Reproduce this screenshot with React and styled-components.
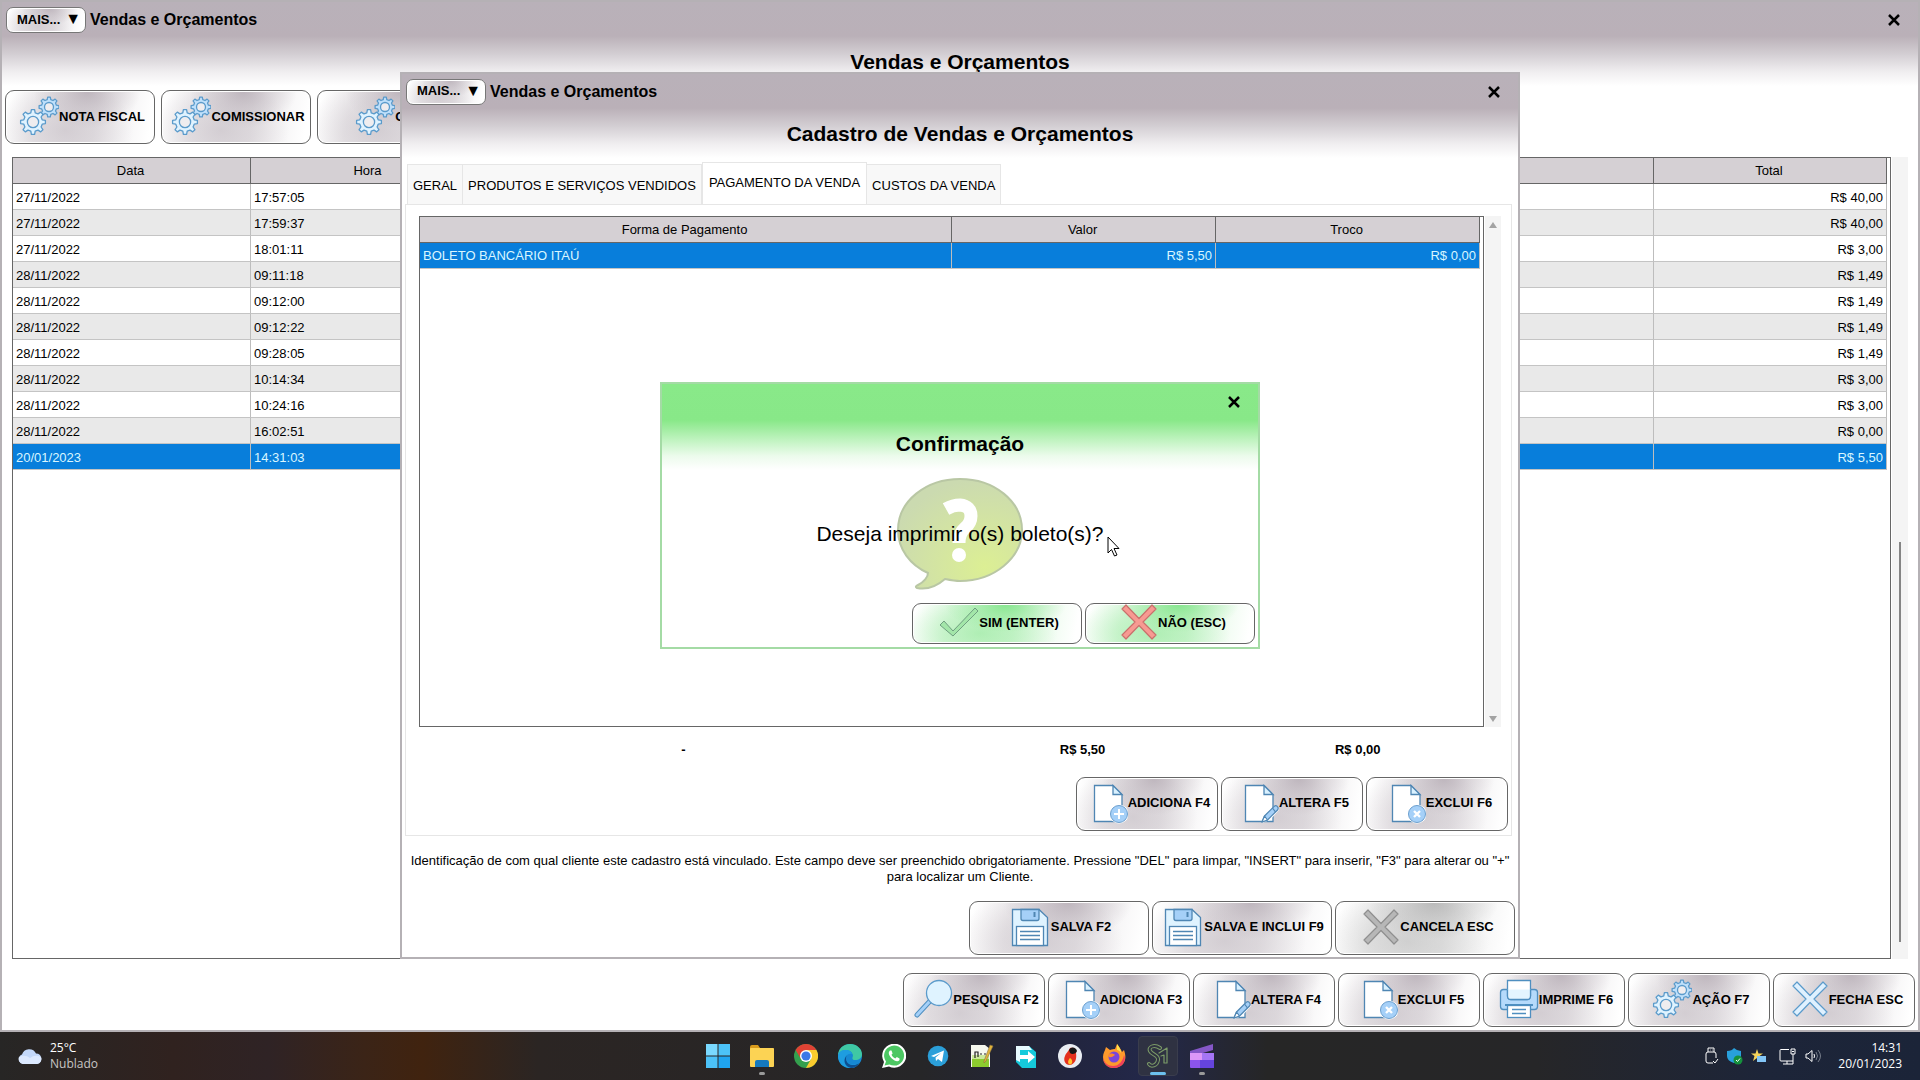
import React from "react";
import styled, { createGlobalStyle } from "styled-components";

const GlobalStyle = createGlobalStyle`
  * {
    box-sizing: border-box;
  }

  body {
    margin: 0;
    background: #262626;
    color: #000;
    font-family: "Liberation Sans", Arial, sans-serif;
    font-size: 13px;
  }

  button {
    margin: 0;
    font-family: inherit;
    color: inherit;
  }
`;

const sales = [
  { date: "27/11/2022", time: "17:57:05", total: "R$ 40,00" },
  { date: "27/11/2022", time: "17:59:37", total: "R$ 40,00" },
  { date: "27/11/2022", time: "18:01:11", total: "R$ 3,00" },
  { date: "28/11/2022", time: "09:11:18", total: "R$ 1,49" },
  { date: "28/11/2022", time: "09:12:00", total: "R$ 1,49" },
  { date: "28/11/2022", time: "09:12:22", total: "R$ 1,49" },
  { date: "28/11/2022", time: "09:28:05", total: "R$ 1,49" },
  { date: "28/11/2022", time: "10:14:34", total: "R$ 3,00" },
  { date: "28/11/2022", time: "10:24:16", total: "R$ 3,00" },
  { date: "28/11/2022", time: "16:02:51", total: "R$ 0,00" },
  { date: "20/01/2023", time: "14:31:03", total: "R$ 5,50", selected: true },
];

const tabs = [
  "GERAL",
  "PRODUTOS E SERVIÇOS VENDIDOS",
  "PAGAMENTO DA VENDA",
  "CUSTOS DA VENDA",
];

/* ---------- button icons, all on a 44x44 box ---------- */

const gearPath = (cx, cy, r, teeth) => {
  const points = [];
  const step = (Math.PI * 2) / teeth;
  for (let i = 0; i < teeth; i++) {
    const a = i * step - Math.PI / 2;
    [
      [-0.3, 0.76],
      [-0.16, 1],
      [0.16, 1],
      [0.3, 0.76],
    ].forEach(([k, m]) => {
      const x = cx + Math.cos(a + k * step) * r * m;
      const y = cy + Math.sin(a + k * step) * r * m;
      points.push(`${x.toFixed(1)} ${y.toFixed(1)}`);
    });
  }
  return `M${points.join("L")}Z`;
};

const Gear = ({ cx, cy, r, fill, teeth }) => (
  <g stroke="#5b9bcb" strokeWidth="1.3" strokeLinejoin="round">
    <path d={gearPath(cx, cy, r, teeth)} fill={fill} />
    <circle cx={cx} cy={cy} r={r * 0.45} fill="#efedef" />
  </g>
);

const ButtonIcon = ({ children }) => <Icon viewBox="-1 0 44 44">{children}</Icon>;

const GearsIcon = () => (
  <ButtonIcon>
    <Gear cx={33} cy={13} r={10} fill="#bfe0fb" teeth={8} />
    <Gear cx={17} cy={28} r={12.5} fill="#e0f3ff" teeth={8} />
  </ButtonIcon>
);

const Sheet = () => (
  <g stroke="#4f86b3" strokeWidth="1.3">
    <path d="M9.5 4.5H28L37 13.500V40.500H9.5Z" fill="#fff" />
    <path d="M28 4.500V13.500H37Z" fill="#d9f1ff" />
  </g>
);

const AddIcon = () => (
  <ButtonIcon>
    <Sheet />
    <circle cx="34" cy="33" r="9.500" fill="#fff" />
    <circle cx="34" cy="33" r="8.500" fill="#a5d0f8" stroke="#6c9fce" />
    <path d="M34 28V38M29 33H39" stroke="#fff" strokeWidth="2" />
  </ButtonIcon>
);

const EditIcon = () => (
  <ButtonIcon>
    <Sheet />
    <path d="M26 42L29 34L39 24L44 28L34 39Z" fill="#fff" />
    <g stroke="#4f86b3" strokeWidth="1.200" strokeLinejoin="round">
      <path d="M26 41L28.500 35L38.500 25Q40.500 24 42 26.500Q42.500 28 41.500 29L31.500 39Z" fill="#a5d0f8" />
      <path d="M26 41L28.500 35L31.500 39Z" fill="#fff" />
      <path d="M36.500 27L39.500 31" />
    </g>
  </ButtonIcon>
);

const DeleteIcon = () => (
  <ButtonIcon>
    <Sheet />
    <circle cx="34" cy="33" r="9.500" fill="#fff" />
    <circle cx="34" cy="33" r="8.500" fill="#a5d0f8" stroke="#6c9fce" />
    <path d="M31 30L37 36M37 30L31 36" stroke="#fff" strokeWidth="2.400" />
  </ButtonIcon>
);

const SearchIcon = () => (
  <ButtonIcon>
    <path d="M20 24L7 38" stroke="#4f8fc0" strokeWidth="5" strokeLinecap="round" />
    <path d="M20 24L7 38" stroke="#a5d0f8" strokeWidth="3" strokeLinecap="round" />
    <circle cx="29" cy="16" r="12.500" fill="#dff3ff" stroke="#5b9bcb" strokeWidth="1.300" />
  </ButtonIcon>
);

const PrinterIcon = () => (
  <ButtonIcon>
    <g stroke="#4f8fc0" strokeWidth="1.300">
      <rect x="4.500" y="12.500" width="37" height="20" rx="3" fill="#b5dafb" />
      <path d="M11.500 3.500H34.500V19Q34.500 22.500 31 22.500H15Q11.500 22.500 11.500 19Z" fill="#fff" />
      <path d="M11.500 12.500V19Q11.500 22.500 15 22.500H31Q34.500 22.500 34.500 19V12.500" fill="#e4f5ff" />
      <path d="M9 28H37" strokeWidth="2" />
      <rect x="11.500" y="28.500" width="23" height="12" fill="#fff" />
      <path d="M16 32.500H30M16 36.500H30" />
    </g>
  </ButtonIcon>
);

const FloppyIcon = () => (
  <ButtonIcon>
    <g stroke="#4f86b3" strokeWidth="1.300">
      <path d="M4.500 4.500H31L39.500 12.500V40.500H4.500Z" fill="#dff3ff" />
      <path d="M13 4.500H31V13.500Q31 15.500 29 15.500H15Q13 15.500 13 13.500Z" fill="#a5d0f8" />
      <path d="M26.500 7V12" strokeWidth="2" />
      <rect x="8.500" y="21.500" width="27" height="19" fill="#fff" />
      <path d="M12 26.500H32M12 30.500H32M12 34.500H32" />
    </g>
  </ButtonIcon>
);

const CrossIcon = ({ fill = "#dff1ff", stroke = "#5b9bcb" }) => (
  <ButtonIcon>
    <path
      d="M7 9L11 5L24 18.500L37 5L41 9L28 22L41 35L37 39L24 25.500L11 39L7 35L20 22Z"
      fill={fill}
      stroke={stroke}
      strokeWidth="1.200"
      strokeLinejoin="round"
    />
  </ButtonIcon>
);

const CheckIcon = () => (
  <ButtonIcon>
    <path d="M4 25L8 21L17 31L39 8L42 11L17 36Z" fill="#a3e6a9" stroke="#6f9f80" strokeLinejoin="round" />
  </ButtonIcon>
);

/* ---------- taskbar icons, all on a 24x24 box ---------- */

const taskIcons = [
  {
    name: "Iniciar",
    art: (
      <g fill="#4cc2f8">
        <path d="M0 0H11.500V11.500H0Z" fill="#7ad9ff" />
        <path d="M12.500 0H24V11.500H12.500Z" />
        <path d="M0 12.500H11.500V24H0Z" />
        <path d="M12.500 12.500H24V24H12.500Z" fill="#1fa4f0" />
      </g>
    ),
  },
  {
    name: "Explorador de Arquivos",
    open: true,
    art: (
      <g>
        <path d="M0 3Q0 1 2 1H8L10 4H22Q24 4 24 6V10H0Z" fill="#d99b1c" />
        <rect y="4" width="24" height="19" rx="1" fill="#fcd354" />
        <path d="M5 23V18Q5 16 7 16H17Q19 16 19 18V23Z" fill="#1579bd" />
      </g>
    ),
  },
  {
    name: "Chrome",
    art: (
      <g>
        <circle cx="12" cy="12" r="12" fill="#34a04e" />
        <path d="M12 12L1.600 6A12 12 0 0 1 22.400 6Z" fill="#e04234" />
        <path d="M12 6H22.400A12 12 0 0 1 12 24L17 15Z" fill="#fbcb2e" />
        <path d="M1.600 6L7 15L12 6Z" fill="#e04234" />
        <circle cx="12" cy="12" r="6" fill="#fff" />
        <circle cx="12" cy="12" r="4.600" fill="#3b78e7" />
      </g>
    ),
  },
  {
    name: "Edge",
    art: (
      <g>
        <circle cx="12" cy="12" r="12" fill="#1688d3" />
        <path d="M0 12C0 4 6 0 12 0C19 0 24 5 24 10C24 14 21 16 17 16C14 16 14 14 15 12C15 8 11 6 8 6C4 6 1 8 0 12Z" fill="#3fc8a4" />
        <path d="M0 12C1 7 4 6 8 6C11 6 14 8 14 10C9 9 7 13 9 17C11 21 16 22 21 19C18 24 14 24 12 24C5 24 0 19 0 12Z" fill="#1e9de0" />
        <path d="M9 11C7 14 8 20 14 21C17 21.500 20 20 21 19C20 22 16 24 13 24C7 23 4 16 9 11Z" fill="#0d4f91" />
      </g>
    ),
  },
  {
    name: "WhatsApp",
    art: (
      <g>
        <path d="M0 24L2 18A12 12 0 1 1 7 22.500Z" fill="#fff" />
        <path d="M2.500 21.500L4 17.500A10 10 0 1 1 7.500 20.500Z" fill="#4cc763" />
        <path d="M8 6.500C6 8 6.500 11 9.500 14.200C13 17.500 16 18 17.500 16V14.500L14.800 13L13.300 14.500C11.500 13.800 10.300 12.500 9.500 10.800L10.600 9.500L9.500 6.500Z" fill="#fff" />
      </g>
    ),
  },
  {
    name: "Telegram",
    art: (
      <g>
        <circle cx="12" cy="12" r="10.300" fill="#2b9fd9" />
        <path d="M5 12L18 6.500L16 18L12 15L10 17L9.500 13.500L15 9L8 13Z" fill="#fff" />
      </g>
    ),
  },
  {
    name: "Notepad++",
    art: (
      <g>
        <path d="M1 1H15L20 5V23H1Z" fill="#f5f7ee" />
        <path d="M2 14H19V23H2Z" fill="#8ccc2e" />
        <path d="M2 11H19V15H2Z" fill="#cbe89b" />
        <path d="M5 14V8H8V13M10 10H12M14 10H16" fill="none" stroke="#222" strokeWidth="1.200" />
        <path d="M14 17L20 1L23 2L16 17L14 19Z" fill="#e2b33a" stroke="#8a7340" strokeWidth="0.600" />
      </g>
    ),
  },
  {
    name: "Transferência",
    art: (
      <g>
        <path d="M2 2H15L22 8V24H8L2 18Z" fill="#15cadb" />
        <path d="M2 2H15L18 6H6V18L2 16Z" fill="#e8fbff" />
        <path d="M6 11H14V7L21 13L14 19V15H6Z" fill="#fff" />
      </g>
    ),
  },
  {
    name: "Gravador",
    art: (
      <g>
        <circle cx="12" cy="12" r="12" fill="#e9edf2" />
        <path d="M12 4C17 3 19 6 18 9C19 15 17 20 12 21C7 21 5 16 7 12C8 9 10 8 12 4Z" fill="#e4301d" />
        <path d="M11 6C13 2 18 3 19 7C18 10 14 11 12 9Z" fill="#161616" />
        <path d="M12 14C15 16 15 20 12 20.500C9 20 10 16 12 14Z" fill="#ffc22e" />
      </g>
    ),
  },
  {
    name: "Firefox",
    art: (
      <g>
        <path d="M1 13C1 9 3 7 4 3L8 6C10 5 12 5 13 5L15 0C17 3 19 5 20 8L22 6C24 12 24 16 21 20C16 25 8 25 4 21C2 19 1 16 1 13Z" fill="#ff9a2c" />
        <path d="M1 13C2 19 6 22 11 22C17 22 21 17 22 11C25 18 19 24 12 24C5 24 1 19 1 13Z" fill="#f0405a" />
        <path d="M15 0C17 3 19 5 19 9C18 7 16 6 15 6Z" fill="#ffe04d" />
        <circle cx="12" cy="13" r="5.500" fill="#7b45d9" />
        <path d="M6 11C8 9 11 9 13 11C11 12 10 14 7 13Z" fill="#ff8a2c" />
      </g>
    ),
  },
  {
    name: "Sistema de Vendas",
    active: true,
    art: (
      <g fill="none" strokeLinecap="round" strokeLinejoin="round">
        <path d="M14 4C8 0 2 3 4 7C6 11 13 11 12 16C11 22 5 23 3 20" stroke="#7b9a68" strokeWidth="4" />
        <path d="M14 4C8 0 2 3 4 7C6 11 13 11 12 16C11 22 5 23 3 20" stroke="#2f3240" strokeWidth="2" />
        <path d="M13 9L21 4V19H18V11L15 12" stroke="#7b9a68" strokeWidth="1.200" />
      </g>
    ),
  },
  {
    name: "Clipchamp",
    open: true,
    art: (
      <g>
        <path d="M0 7L23 0V6L6 11H0Z" fill="#8557c7" />
        <rect y="9" width="24" height="15" rx="1" fill="#8b54ea" />
        <path d="M0 9H12V16H0Z" fill="#dd97f8" />
        <path d="M12 9H24V16H12Z" fill="#a575f5" />
        <path d="M10 16H24V24H10Z" fill="#6544dd" />
      </g>
    ),
  },
];

/* ---------- shared parts ---------- */

const WindowHeader = ({ label, title }) => (
  <header>
    <TitleBar>
      {label && (
        <>
          <MoreButton type="button" aria-haspopup="menu">
            MAIS... <DownMark aria-hidden="true">▼</DownMark>
          </MoreButton>
          <AppName>{label}</AppName>
        </>
      )}
      <CloseButton type="button" aria-label="Fechar">
        <svg width="12" height="12" viewBox="0 0 12 12">
          <path d="M1 1L11 11M11 1L1 11" stroke="#000" strokeWidth="2.500" />
        </svg>
      </CloseButton>
    </TitleBar>
    <Title>{title}</Title>
  </header>
);

const Action = ({ icon, children, ...rest }) => (
  <ActionButton type="button" {...rest}>
    {icon}
    {children}
  </ActionButton>
);

function SalesWindow() {
  return (
    <MainWindow>
      <WindowHeader label="Vendas e Orçamentos" title="Vendas e Orçamentos" />
      <Toolbar>
        <Action icon={<GearsIcon />} $width={150}>NOTA FISCAL</Action>
        <Action icon={<GearsIcon />} $width={150}>COMISSIONAR</Action>
        <Action icon={<GearsIcon />} $width={150}>CNAB</Action>
      </Toolbar>
      <GridArea>
        <GridFrame>
          <Table>
            <colgroup>
              <col style={{ width: 238 }} />
              <col style={{ width: 236 }} />
              <col />
              <col style={{ width: 233 }} />
            </colgroup>
            <thead>
              <tr>
                <th>Data</th>
                <th>Hora</th>
                <th>Cliente</th>
                <th>Total</th>
              </tr>
            </thead>
            <tbody>
              {sales.map((sale) => (
                <Row key={sale.time} $selected={sale.selected}>
                  <td>{sale.date}</td>
                  <td>{sale.time}</td>
                  <td />
                  <Money>{sale.total}</Money>
                </Row>
              ))}
            </tbody>
          </Table>
        </GridFrame>
        <Scrollbar $end>
          <Thumb />
        </Scrollbar>
      </GridArea>
      <Footer>
        <Action icon={<SearchIcon />}>PESQUISA F2</Action>
        <Action icon={<AddIcon />}>ADICIONA F3</Action>
        <Action icon={<EditIcon />}>ALTERA F4</Action>
        <Action icon={<DeleteIcon />}>EXCLUI F5</Action>
        <Action icon={<PrinterIcon />}>IMPRIME F6</Action>
        <Action icon={<GearsIcon />}>AÇÃO F7</Action>
        <Action icon={<CrossIcon />}>FECHA ESC</Action>
      </Footer>
    </MainWindow>
  );
}

function SaleForm() {
  return (
    <FormWindow role="dialog" aria-label="Cadastro de Vendas e Orçamentos">
      <WindowHeader label="Vendas e Orçamentos" title="Cadastro de Vendas e Orçamentos" />
      <TabList role="tablist">
        {tabs.map((tab) => (
          <Tab
            key={tab}
            type="button"
            role="tab"
            aria-selected={tab === "PAGAMENTO DA VENDA"}
            $active={tab === "PAGAMENTO DA VENDA"}
          >
            {tab}
          </Tab>
        ))}
      </TabList>
      <Panel role="tabpanel">
        <PaymentArea>
          <GridFrame>
            <Table>
              <colgroup>
                <col style={{ width: "50.2%" }} />
                <col />
                <col />
              </colgroup>
              <thead>
                <tr>
                  <th>Forma de Pagamento</th>
                  <th>Valor</th>
                  <th>Troco</th>
                </tr>
              </thead>
              <tbody>
                <Row $selected>
                  <td>BOLETO BANCÁRIO ITAÚ</td>
                  <Money>R$ 5,50</Money>
                  <Money>R$ 0,00</Money>
                </Row>
              </tbody>
            </Table>
          </GridFrame>
          <Scrollbar>
            <Arrow viewBox="0 0 8 6"><path d="M4 0L8 6H0Z" /></Arrow>
            <Arrow viewBox="0 0 8 6"><path d="M0 0H8L4 6Z" /></Arrow>
          </Scrollbar>
        </PaymentArea>
        <Totals>
          <span>-</span>
          <span>R$ 5,50</span>
          <span>R$ 0,00</span>
        </Totals>
        <Footer>
          <Action icon={<AddIcon />}>ADICIONA F4</Action>
          <Action icon={<EditIcon />}>ALTERA F5</Action>
          <Action icon={<DeleteIcon />}>EXCLUI F6</Action>
        </Footer>
      </Panel>
      <Help>
        Identificação de com qual cliente este cadastro está vinculado. Este campo deve ser
        preenchido obrigatoriamente. Pressione "DEL" para limpar, "INSERT" para inserir, "F3" para
        alterar ou "+" para localizar um Cliente.
      </Help>
      <Footer>
        <Action icon={<FloppyIcon />} $width={180}>SALVA F2</Action>
        <Action icon={<FloppyIcon />} $width={180}>SALVA E INCLUI F9</Action>
        <Action icon={<CrossIcon fill="#b7b7b7" stroke="#8f8f8f" />} $width={180} $shade="#b4b4b4">
          CANCELA ESC
        </Action>
      </Footer>
    </FormWindow>
  );
}

function ConfirmDialog() {
  return (
    <ConfirmWindow role="alertdialog" aria-label="Confirmação">
      <WindowHeader title="Confirmação" />
      <Question>
        <Bubble viewBox="0 0 126 112" aria-hidden="true">
          <defs>
            <radialGradient id="bubble" cx="0.7" cy="0.8" r="0.8">
              <stop offset="0" stopColor="#dcef94" />
              <stop offset="1" stopColor="#cbdab0" />
            </radialGradient>
          </defs>
          <path
            d="M63 1C97 1 125 23 125 52C125 80 97 103 63 103C58 103 53 102 48 101C40 108 30 112 20 110C18 109 19 108 21 107C27 104 31 99 31 95C13 87 1 71 1 52C1 23 29 1 63 1Z"
            fill="url(#bubble)"
            stroke="#b9c7a4"
            strokeWidth="2"
          />
          <path
            d="M49 31Q56 27 63 27Q74 28 74 38Q74 45 68 50Q62 55 62 65"
            fill="none"
            stroke="#fff"
            strokeWidth="13"
          />
          <circle cx="62" cy="77" r="7" fill="#fff" />
        </Bubble>
        <Message>Deseja imprimir o(s) boleto(s)?</Message>
      </Question>
      <Footer>
        <Action icon={<CheckIcon />} $width={170} $short $shade="#7fe487">SIM (ENTER)</Action>
        <Action icon={<CrossIcon fill="#f79a92" stroke="#c9706c" />} $width={170} $short $shade="#7fe487">
          NÃO (ESC)
        </Action>
      </Footer>
      <Cursor viewBox="0 0 13 21" aria-hidden="true">
        <path d="M1 1V17L4.500 13.500L7.500 20L10 19L7 12.500H12Z" fill="#fff" stroke="#000" />
      </Cursor>
    </ConfirmWindow>
  );
}

function Taskbar() {
  return (
    <Bar>
      <Weather>
        <svg width="24" height="16" viewBox="0 0 24 16">
          <path d="M5 16A5 5 0 0 1 4 6.500A7.500 7.500 0 0 1 18 5.500A5.300 5.300 0 0 1 19 16Z" fill="#c3d8fa" />
          <path d="M5 16A5 5 0 0 1 1 9Q7 6 12 10Q17 6 23 9A5 5 0 0 1 19 16Z" fill="#dce9ff" />
        </svg>
        <div>
          <div>25°C</div>
          <Muted>Nublado</Muted>
        </div>
      </Weather>
      <Apps>
        {taskIcons.map((app) => (
          <AppButton key={app.name} type="button" aria-label={app.name} $active={app.active} $open={app.open}>
            <svg width="24" height="24" viewBox="0 0 24 24">{app.art}</svg>
          </AppButton>
        ))}
      </Apps>
      <Tray>
        <svg width="14" height="18" viewBox="0 0 14 18" fill="none" stroke="#fff">
          <path d="M3 5V1H9V5M8 16H3Q1 16 1 14V7Q1 5 3 5H9Q11 5 11 7V11M8 14L10 16L13 12M5 3H5.500M7 3H7.500" />
        </svg>
        <svg width="16" height="17" viewBox="0 0 16 17">
          <path d="M0 3Q5 3 7 0Q10 3 14 3V8Q14 13 7 15Q0 13 0 8Z" fill="#28a0dc" />
          <circle cx="11" cy="12" r="4.500" fill="#15913c" />
          <path d="M9 12L10.500 13.500L13 10.500" fill="none" stroke="#fff" />
        </svg>
        <svg width="16" height="14" viewBox="0 0 16 14">
          <path d="M6 0L7.500 4.500H12L8.500 7L10 12L6 9L2 12L3.500 7L0 4.500H4.500Z" fill="#f4d35b" />
          <rect x="6" y="7" width="9" height="6" fill="#83c6f7" />
        </svg>
        <Network width="18" height="17" viewBox="0 0 18 17" fill="none" stroke="#fff">
          <path d="M10 1.500H2Q1 1.500 1 2.500V12Q1 13 2 13H14M8 13V16M4 16H14V6M12 1H16V6H12ZM13 3.500H15" />
        </Network>
        <svg width="17" height="14" viewBox="0 0 17 14" fill="none" stroke="#fff">
          <path d="M1 5V9H3L7 12.500V1.500L3 5ZM9 5Q10 7 9 9" />
          <path d="M11 3Q14 7 11 11M13 1Q18 7 13 13" stroke="#777e8b" />
        </svg>
        <Clock>
          14:31
          <br />
          20/01/2023
        </Clock>
      </Tray>
    </Bar>
  );
}

export default function App() {
  return (
    <>
      <GlobalStyle />
      <Desktop>
        <Workspace>
          <SalesWindow />
          <Layer>
            <SaleForm />
          </Layer>
          <Layer>
            <ConfirmDialog />
          </Layer>
        </Workspace>
        <Taskbar />
      </Desktop>
    </>
  );
}

/* ---------- styles ---------- */

const Desktop = styled.div`
  min-height: 100vh;
  display: flex;
  flex-direction: column;
`;

const Workspace = styled.main`
  position: relative;
  flex: 1;
  display: flex;
`;

/* Windows stacked above the main one */
const Layer = styled.div`
  position: absolute;
  inset: 0 0 2px;
  display: flex;
  align-items: center;
  justify-content: center;
`;

const WindowFrame = styled.section`
  display: flex;
  flex-direction: column;
  border: 2px solid #b5b1b5;
  background: linear-gradient(
      #b9b1b9 0,
      #bab0b8 34px,
      #d3ced3 52px,
      #f0eef0 70px,
      #fff 84px
    )
    no-repeat #fff;
`;

const MainWindow = styled(WindowFrame)`
  flex: 1;
  min-width: 0;
  padding-bottom: 3px;
`;

const FormWindow = styled(WindowFrame)`
  width: 1120px;
  max-width: 100%;
  height: calc(100% - 143px);
  padding-bottom: 2px;
`;

const ConfirmWindow = styled(WindowFrame)`
  position: relative;
  width: 600px;
  max-width: 100%;
  padding-bottom: 3px;
  border-color: #a4dba5;
  background: linear-gradient(
      #89e989 0,
      #88e888 36px,
      #c0f3c0 56px,
      #ecfbec 72px,
      #fff 86px
    )
    no-repeat #fff;
`;

const TitleBar = styled.div`
  display: flex;
  align-items: center;
  height: 36px;
  padding: 0 8px 0 4px;
`;

const shading = (shade) => `
  radial-gradient(ellipse 36% 70% at 55% 2%, ${shade}e0 0%, ${shade}70 45%, ${shade}00 100%),
  radial-gradient(ellipse 46% 100% at 40% 75%, ${shade}80 0%, ${shade}48 50%, ${shade}00 100%),
  linear-gradient(100deg, #fff 2%, ${shade}38 22%, ${shade}48 60%, #fff 96%)
`;

const MoreButton = styled.button`
  display: flex;
  align-items: center;
  justify-content: space-between;
  width: 80px;
  height: 26px;
  padding: 0 4px 2px 10px;
  border: 1px solid #777;
  border-radius: 7px;
  box-shadow: inset 0 0 0 1px #fff;
  background: ${shading("#b9b0b8")}, #fff;
  font-size: 13px;
  font-weight: bold;
`;

const DownMark = styled.span`
  font-size: 16px;
  line-height: 16px;
`;

const AppName = styled.span`
  margin-left: 4px;
  font-size: 16px;
  font-weight: bold;
`;

const CloseButton = styled.button`
  display: grid;
  place-items: center;
  width: 32px;
  height: 32px;
  margin-left: auto;
  padding: 0;
  border: 0;
  background: none;
`;

const Title = styled.h1`
  margin: 12px 0 16px;
  font-size: 21px;
  line-height: 24px;
  text-align: center;
`;

const Toolbar = styled.div`
  display: flex;
  gap: 6px;
  padding: 0 3px;
`;

const Footer = styled.div`
  display: flex;
  justify-content: flex-end;
  gap: 3px;
  padding: 0 3px;
`;

const ActionButton = styled.button`
  display: flex;
  align-items: center;
  justify-content: center;
  width: ${({ $width = 142 }) => $width}px;
  height: ${({ $short }) => ($short ? 41 : 54)}px;
  padding: 0 0 2px;
  border: 1px solid #666;
  border-radius: 9px;
  box-shadow: inset 0 0 0 1px #fff;
  background: ${({ $shade = "#b9b0b8" }) => shading($shade)}, #fff;
  font-size: 13px;
  font-weight: bold;
  white-space: nowrap;
`;

const Icon = styled.svg`
  flex: none;
  width: 44px;
  height: 44px;
`;

const GridArea = styled.div`
  flex: 1;
  display: flex;
  gap: 1px;
  min-height: 0;
  margin: 13px 10px 14px;
`;

const PaymentArea = styled(GridArea)`
  margin: 0 10px 0 13px;
`;

const GridFrame = styled.div`
  flex: 1;
  min-width: 0;
  padding-right: 3px;
  border: 1px solid #666;
  background: #fff;
`;

const Table = styled.table`
  width: 100%;
  table-layout: fixed;
  border-collapse: separate;
  border-spacing: 0;

  th {
    height: 26px;
    padding: 0 2px 0 0;
    border-right: 1px solid #666;
    border-bottom: 1px solid #666;
    background: #d5d0d4;
    font-weight: normal;
  }

  td {
    height: 26px;
    padding: 1px 3px 0;
    border-right: 1px solid #bdbdbd;
    border-bottom: 1px solid #c4c4c4;
  }
`;

const Row = styled.tr`
  background: #fff;

  &:nth-child(even) {
    background: #e9e9e9;
  }

  && {
    ${({ $selected }) => $selected && "background: #087edb; color: #d9f6ff;"}
  }
`;

const Money = styled.td`
  text-align: right;
`;

const Scrollbar = styled.div`
  display: flex;
  flex-direction: column;
  align-items: center;
  justify-content: ${({ $end }) => ($end ? "flex-end" : "space-between")};
  width: 16px;
  padding: ${({ $end }) => ($end ? "0 0 17px" : "6px 0 5px")};
  background: #f4f4f4;
`;

const Thumb = styled.div`
  width: 2px;
  height: 51%;
  background: #858585;
`;

const Arrow = styled.svg`
  width: 8px;
  height: 6px;
  fill: #a3a3a3;
`;

const TabList = styled.div`
  display: flex;
  align-items: flex-end;
  height: 42px;
  padding-left: 5px;
`;

const Tab = styled.button`
  height: ${({ $active }) => ($active ? 42 : 40)}px;
  padding: ${({ $active }) => ($active ? "0 6px 2px" : "2px 5px 0")};
  border: 1px solid #e6e6e6;
  border-bottom: 0;
  border-left-width: ${({ $active }) => ($active ? 1 : 0)}px;
  background: ${({ $active }) => ($active ? "#fff" : "#f8f8f8")};
  font-size: 13px;
  white-space: nowrap;

  &:first-child {
    border-left-width: 1px;
  }
`;

const Panel = styled.div`
  flex: 1;
  display: flex;
  flex-direction: column;
  min-height: 0;
  margin: 0 6px 0 3px;
  padding: 11px 0 4px;
  border: 1px solid #e6e6e6;
`;

const Totals = styled.div`
  display: grid;
  grid-template-columns: 49% 25% 1fr;
  margin: 0 13px 0 13px;
  padding: 15px 0 19px;
  font-weight: bold;
  line-height: 16px;
  text-align: center;
`;

const Help = styled.p`
  margin: 17px 0 16px;
  padding: 0 4px;
  line-height: 16px;
  text-align: center;
`;

const Question = styled.div`
  display: grid;
  place-items: center;
  padding: 6px 0 13px;
`;

const Bubble = styled.svg`
  grid-area: 1 / 1;
  width: 126px;
  height: 112px;
`;

const Message = styled.p`
  grid-area: 1 / 1;
  z-index: 1;
  margin: 0;
  font-size: 21px;
`;

const Cursor = styled.svg`
  position: absolute;
  top: 152px;
  left: 445px;
  width: 13px;
  height: 21px;
`;

const Bar = styled.footer`
  display: grid;
  grid-template-columns: 1fr auto 1fr;
  align-items: center;
  height: 48px;
  padding: 0 18px 0 18px;
  background: linear-gradient(
    90deg,
    #272625 0%,
    #30221f 9%,
    #2f2325 14%,
    #3b2417 19%,
    #40230f 22%,
    #2b2523 28%,
    #262628 48%,
    #22253f 56%,
    #23284a 60%,
    #262626 66%,
    #262628 80%,
    #1d2539 92%,
    #1b2438 100%
  );
  color: #fff;
  font-family: "Open Sans", "Noto Sans", sans-serif;
  font-size: 12px;
  line-height: 16px;
`;

const Weather = styled.div`
  display: flex;
  align-items: center;
  gap: 8px;
`;

const Muted = styled.div`
  color: #c8c5c4;
`;

const Apps = styled.nav`
  display: flex;
  gap: 4px;
`;

const AppButton = styled.button`
  position: relative;
  display: grid;
  place-items: center;
  width: 40px;
  height: 40px;
  padding: 0;
  border: 1px solid ${({ $active }) => ($active ? "#3a3d4d" : "transparent")};
  border-radius: 4px;
  background: ${({ $active }) => ($active ? "#2f3242" : "none")};

  &::after {
    content: "";
    position: absolute;
    bottom: 0;
    width: ${({ $active, $open }) => ($active ? 16 : $open ? 6 : 0)}px;
    height: 3px;
    border-radius: 2px;
    background: ${({ $active }) => ($active ? "#6cc0ee" : "#9a9a9a")};
  }
`;

const Tray = styled.div`
  display: flex;
  align-items: center;
  justify-content: flex-end;
  gap: 8px;
`;

const Network = styled.svg`
  margin-left: 4px;
`;

const Clock = styled.time`
  margin-left: 8px;
  text-align: right;
`;
